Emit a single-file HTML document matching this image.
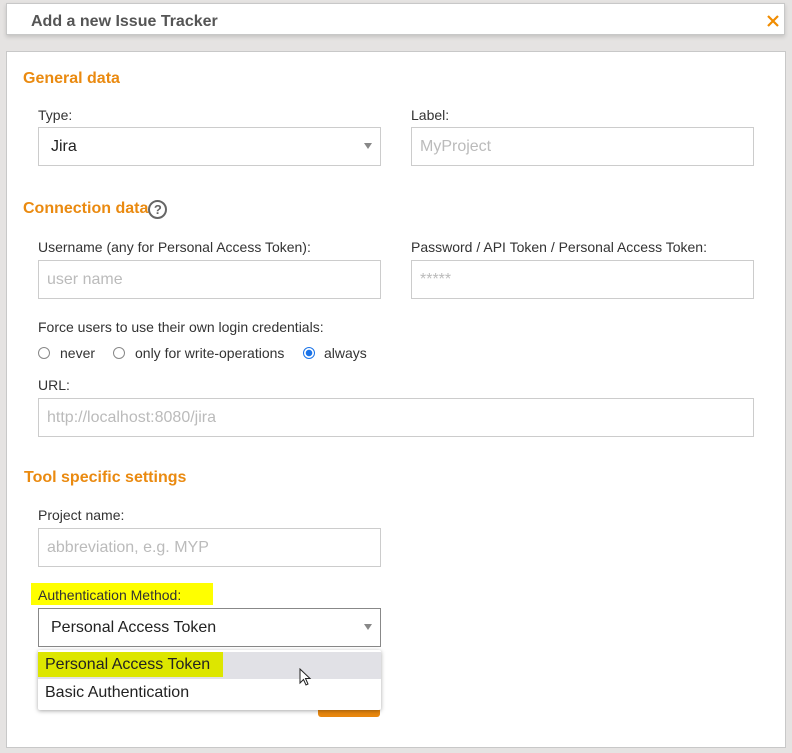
<!DOCTYPE html>
<html><head><style>
body{margin:0;width:792px;height:753px;background:#e5e3e2;font-family:"Liberation Sans",Arial,sans-serif;position:relative;overflow:hidden}
.a{position:absolute}
.hdr{left:6px;top:3px;width:777px;height:30px;background:#fff;border:1px solid #c8c8c8;box-shadow:0 2px 4px rgba(0,0,0,.15)}
.hdr span{position:absolute;left:24px;top:9px;font-size:16px;font-weight:bold;color:#555}
.box{left:6px;top:51px;width:778px;height:695px;background:#fff;border:1px solid #c8c8c8}
.h{font-size:16px;font-weight:bold;color:#ea8a10}
.l{font-size:14px;color:#333}
.in{border:1px solid #ccc;background:#fff;box-sizing:border-box;height:39px;font-size:16px;color:#bbb;padding:10px 8px}
.sel{color:#222;padding:10px 12px}
.arr{position:absolute;right:8px;top:15px;width:0;height:0;border-left:4px solid transparent;border-right:4px solid transparent;border-top:6px solid #888}
.r{position:absolute;top:0;width:10px;height:10px;border:1.5px solid #888;border-radius:50%}
</style></head><body>
<div class="a hdr"><span>Add a new Issue Tracker</span>
<svg style="position:absolute;left:760px;top:11px" width="12" height="12" viewBox="0 0 12 12"><path d="M1 1L11 11M11 1L1 11" stroke="#f08c00" stroke-width="2.2"/></svg></div>
<div class="a box"></div>
<div class="a h" style="left:23px;top:70px">General data</div>
<div class="a l" style="left:38px;top:107px">Type:</div>
<div class="a in sel" style="left:38px;top:127px;width:343px">Jira<div class="arr"></div></div>
<div class="a l" style="left:411px;top:107px">Label:</div>
<div class="a in" style="left:411px;top:127px;width:343px">MyProject</div>
<div class="a h" style="left:23px;top:200px">Connection data<span style="display:inline-block;width:15px;height:15px;border:2px solid #666;border-radius:50%;color:#666;font-size:13px;text-align:center;line-height:15px;vertical-align:-1px">?</span></div>
<div class="a l" style="left:38px;top:239px">Username (any for Personal Access Token):</div>
<div class="a in" style="left:38px;top:260px;width:343px">user name</div>
<div class="a l" style="left:411px;top:239px">Password / API Token / Personal Access Token:</div>
<div class="a in" style="left:411px;top:260px;width:343px">*****</div>
<div class="a l" style="left:38px;top:319px">Force users to use their own login credentials:</div>
<div class="a l" style="left:38px;top:347px;width:400px;height:16px">
<span class="r" style="left:0;top:0"></span><span class="a" style="left:22px;top:-2px">never</span>
<span class="r" style="left:75px"></span><span class="a" style="left:97px;top:-2px">only for write-operations</span>
<span class="r" style="left:265px;border-color:#1a73e8;background:radial-gradient(#1a73e8 0 3px,#fff 3.5px)"></span><span class="a" style="left:286px;top:-2px">always</span></div>
<div class="a l" style="left:38px;top:377px">URL:</div>
<div class="a in" style="left:38px;top:398px;width:716px">http://localhost:8080/jira</div>
<div class="a h" style="left:24px;top:469px">Tool specific settings</div>
<div class="a l" style="left:38px;top:507px">Project name:</div>
<div class="a in" style="left:38px;top:528px;width:343px">abbreviation, e.g. MYP</div>
<div class="a" style="left:31px;top:583px;width:182px;height:22px;background:#ffff00"></div>
<div class="a l" style="left:38px;top:587px">Authentication Method:</div>
<div class="a in sel" style="left:38px;top:608px;width:343px;border-color:#888">Personal Access Token<div class="arr"></div></div>
<div class="a" style="left:318px;top:700px;width:62px;height:17px;background:#e8870e;border-radius:3px"></div>
<div class="a" style="left:38px;top:650px;width:343px;height:60px;background:#fff;box-shadow:0 1px 4px rgba(0,0,0,.35);border-radius:2px">
<div style="position:absolute;left:0;top:2px;width:343px;height:27px;background:#e1e1e6"></div>
<div style="position:absolute;left:0;top:2px;width:185px;height:25px;background:#dde600"></div>
<div style="position:absolute;left:7px;top:6px;font-size:16px;color:#222">Personal Access Token</div>
<div style="position:absolute;left:7px;top:34px;font-size:16px;color:#222">Basic Authentication</div>
<svg style="position:absolute;left:261px;top:18px" width="14" height="20" viewBox="0 0 14 20"><path d="M1 1 L1 15 L4.5 11.5 L7 17 L9 16 L6.5 10.5 L11 10.5 Z" fill="#fff" stroke="#222" stroke-width="1"/></svg>
</div>
</body></html>
